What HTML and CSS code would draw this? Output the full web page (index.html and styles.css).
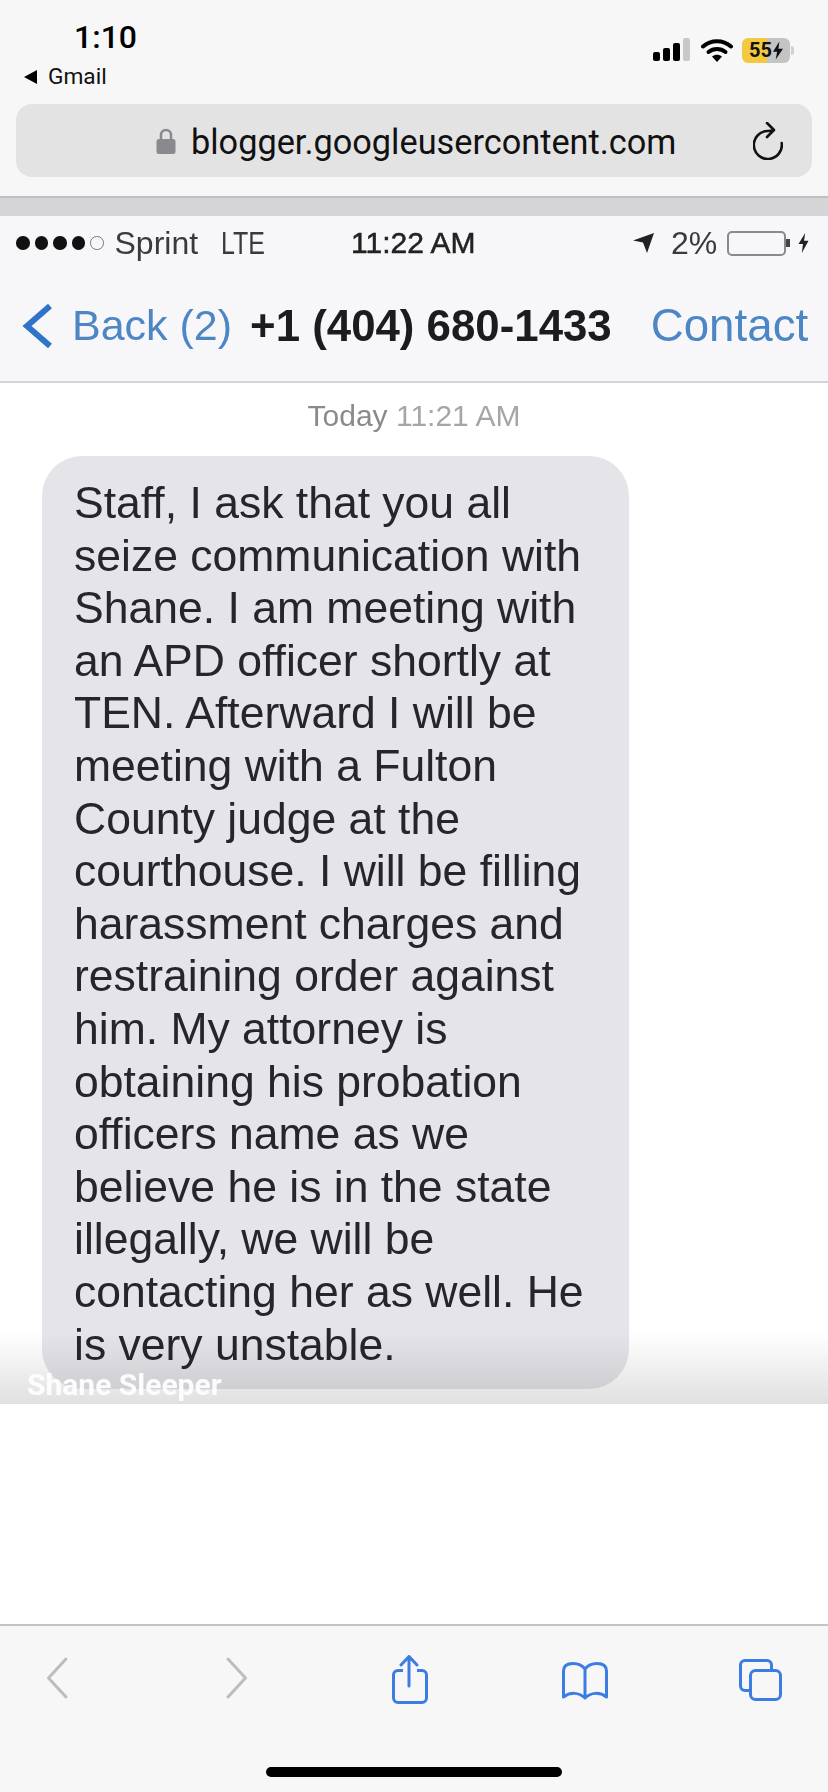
FILE: index.html
```html
<!DOCTYPE html>
<html lang="en">
<head>
  <meta charset="UTF-8">
  <title>blogger.googleusercontent.com</title>
  <link rel="stylesheet" href="styles.css">
</head>
<body>
  <header class="chrome">
    <div class="status">
      <div class="status-left">
        <div class="clock">1:10</div>
        <div class="back-app"><span class="back-tri"></span>Gmail</div>
      </div>
      <div class="status-right">
        <svg class="signal" width="38" height="24" viewBox="0 0 38 24">
          <rect x="0" y="14" width="7" height="9" rx="2" fill="#000"/>
          <rect x="10" y="10" width="7" height="13" rx="2" fill="#000"/>
          <rect x="20" y="5" width="7" height="18" rx="2" fill="#000"/>
          <rect x="30" y="0" width="7" height="23" rx="2" fill="#c8c8c8"/>
        </svg>
        <svg class="wifi" width="32" height="24" viewBox="0 0 32 24">
          <path d="M2 8.500C10 1.500 22 1.500 30 8.500" fill="none" stroke="#000" stroke-width="4" stroke-linecap="round"/>
          <path d="M7.500 14C12.500 10 19.500 10 24.500 14" fill="none" stroke="#000" stroke-width="4" stroke-linecap="round"/>
          <path d="M11 18.500C14 16 18 16 21 18.500L16 24Z" fill="#000"/>
        </svg>
        <div class="battery">
          <span class="battery-num">55</span>
          <svg width="10" height="19" viewBox="0 0 11 20"><path d="M7 0L0 11.500H4.500L3 20L11 8H6Z" fill="#111"/></svg>
        </div>
        <span class="battery-nub"></span>
      </div>
    </div>
    <div class="urlbar">
      <svg class="lock" width="20" height="28" viewBox="0 0 20 28">
        <path d="M5 13V8a5 5 0 0 1 10 0v5" fill="none" stroke="#8a8a8e" stroke-width="2.500"/>
        <rect x="0.500" y="12" width="19" height="15" rx="2.500" fill="#8a8a8e"/>
      </svg>
      <span class="url">blogger.googleusercontent.com</span>
      <svg class="reload" width="30" height="38" viewBox="0 0 30 38">
        <path d="M28.700 21A14 14 0 1 1 15 9L20 8.500" fill="none" stroke="#111" stroke-width="2.600" stroke-linecap="round"/>
        <path d="M14 1L21 8L14 15" fill="none" stroke="#111" stroke-width="2.600" stroke-linecap="round" stroke-linejoin="round"/>
      </svg>
    </div>
  </header>

  <section class="shot">
    <div class="shot-top"></div>
    <div class="phone-status">
      <div class="carrier">
        <span class="dots"><i></i><i></i><i></i><i></i><i class="empty"></i></span>
        <span>Sprint</span><span class="lte">LTE</span>
      </div>
      <div class="phone-time">11:22 AM</div>
      <div class="phone-batt">
        <svg width="22" height="22" viewBox="0 0 22 22"><path d="M22 1L1 8.500L11 10.500L15 21Z" fill="#222"/></svg>
        <span class="pct">2%</span>
        <span class="batt-box"></span>
        <span class="batt-tip"></span>
        <svg class="batt-bolt" width="11" height="20" viewBox="0 0 9 18"><path d="M6 0L0 10H4L3 18L9 7H5Z" fill="#222"/></svg>
      </div>
    </div>
    <nav class="phone-nav">
      <svg class="chev" width="32" height="46" viewBox="0 0 32 46"><path d="M29 3L6 23L29 43" fill="none" stroke="#2f74c8" stroke-width="6"/></svg>
      <span class="nav-link nav-back">Back (2)</span>
      <span class="nav-title">+1 (404) 680-1433</span>
      <span class="nav-link nav-contact">Contact</span>
    </nav>
    <div class="stamp"><b>Today</b> 11:21 AM</div>
    <div class="bubble">Staff, I ask that you all<br>seize communication with<br>Shane. I am meeting with<br>an APD officer shortly at<br>TEN. Afterward I will be<br>meeting with a Fulton<br>County judge at the<br>courthouse. I will be filling<br>harassment charges and<br>restraining order against<br>him. My attorney is<br>obtaining his probation<br>officers name as we<br>believe he is in the state<br>illegally, we will be<br>contacting her as well. He<br>is very unstable.</div>
    <div class="shot-fade"></div>
    <div class="shot-credit">Shane Sleeper</div>
  </section>

  <div class="blank"></div>

  <footer class="toolbar">
    <div class="tools">
      <svg width="48" height="50" viewBox="0 0 48 50"><path d="M32 4L14.500 23L32 42" fill="none" stroke="#bdbdbd" stroke-width="3" stroke-linecap="round" stroke-linejoin="round"/></svg>
      <svg width="48" height="50" viewBox="0 0 48 50"><path d="M18 4L35.500 23L18 42" fill="none" stroke="#bdbdbd" stroke-width="3" stroke-linecap="round" stroke-linejoin="round"/></svg>
      <svg width="48" height="50" viewBox="0 0 48 50">
        <path d="M17 15.500H12a4.500 4.500 0 0 0-4.500 4.500V43a4.500 4.500 0 0 0 4.500 4.500H36a4.500 4.500 0 0 0 4.500-4.500V20a4.500 4.500 0 0 0-4.500-4.500H31" fill="none" stroke="#3b7de3" stroke-width="3"/>
        <path d="M23 31V2M15 10L23 1.500L31 10" fill="none" stroke="#3b7de3" stroke-width="3" stroke-linecap="round" stroke-linejoin="round"/>
      </svg>
      <svg width="48" height="50" viewBox="0 0 48 50">
        <path d="M23 14C20 10 15 8.500 11 8.500C5 8.500 1.500 11 1.500 16V42C8 37 17 37 23 43C29 37 38 37 44.500 42V16C44.500 11 41 8.500 35 8.500C31 8.500 26 10 23 14ZM23 14V43" fill="none" stroke="#3b7de3" stroke-width="3" stroke-linejoin="round"/>
      </svg>
      <svg width="48" height="50" viewBox="0 0 48 50">
        <path d="M33.500 14V10A4.500 4.500 0 0 0 29 5.500H7A4.500 4.500 0 0 0 2.500 10V31A4.500 4.500 0 0 0 7 35.500H12" fill="none" stroke="#3b7de3" stroke-width="3"/>
        <rect x="12.500" y="15.500" width="30" height="29" rx="5" fill="none" stroke="#3b7de3" stroke-width="3"/>
      </svg>
    </div>
    <div class="home-bar"></div>
  </footer>
</body>
</html>
```

FILE: styles.css
```css
body {
  margin: 0;
  width: 828px;
  height: 1792px;
  display: flex;
  flex-direction: column;
  background: #ffffff;
  font-family: "Liberation Sans", Arial, sans-serif;
  overflow: hidden;
}

/* safari chrome */
.chrome {
  height: 198px;
  box-sizing: border-box;
  background: #f7f7f7;
  border-bottom: 2px solid #bfbfc1;
}

.status {
  height: 104px;
  display: flex;
  justify-content: space-between;
}

.status-left {
  padding: 18px 0 0 24px;
}

.clock {
  font-family: Roboto, sans-serif;
  font-size: 32px;
  font-weight: 500;
  line-height: 38px;
  padding-left: 50px;
  color: #000;
}

.back-app {
  display: flex;
  align-items: center;
  font-family: Roboto, sans-serif;
  font-size: 22.700px;
  line-height: 26px;
  margin-top: 8px;
  color: #111;
}

.back-tri {
  width: 0;
  height: 0;
  border-style: solid;
  border-width: 7px 13px 7px 0;
  border-color: transparent #000 transparent transparent;
  margin-right: 11px;
}

.status-right {
  display: flex;
  align-items: center;
  height: 26px;
  margin-top: 37px;
  padding-right: 34px;
}

.wifi {
  margin-left: 10px;
}

.battery {
  width: 48px;
  height: 25px;
  margin-left: 9px;
  border-radius: 6px;
  background: linear-gradient(to right, #f4c93f 0 53%, #c4c4c4 53% 100%);
  display: flex;
  align-items: center;
  justify-content: center;
  gap: 1px;
}

.battery-num {
  font-family: Roboto, sans-serif;
  font-size: 20px;
  font-weight: 700;
  color: #111;
}

.battery-nub {
  width: 3px;
  height: 9px;
  margin-left: 1px;
  border-radius: 0 3px 3px 0;
  background: #d0d0d0;
}

.urlbar {
  height: 73px;
  margin: 0 16px;
  background: #e3e3e4;
  border-radius: 16px;
  display: flex;
  align-items: center;
  padding-left: 140px;
}

.url {
  font-family: Roboto, sans-serif;
  font-size: 34.300px;
  line-height: 40px;
  padding-top: 2px;
  color: #111;
  margin-left: 15px;
}

.reload {
  margin-left: auto;
  margin-right: 29px;
}

/* the screenshot inside the page */
.shot {
  position: relative;
  height: 1206px;
  background: #ffffff;
  overflow: hidden;
}

.shot-top {
  height: 18px;
  background: #d5d5d8;
}

.phone-status {
  height: 54px;
  background: #f7f7f9;
  display: flex;
  align-items: center;
  padding-left: 16px;
  color: #3a3a3c;
  font-size: 32px;
  filter: blur(0.7px);
}

.carrier {
  display: flex;
  align-items: center;
  width: 335px;
}

.dots {
  display: flex;
  gap: 5px;
  margin-right: 11px;
}

.dots i {
  width: 13.500px;
  height: 13.500px;
  border-radius: 50%;
  background: #111;
}

.dots i.empty {
  box-sizing: border-box;
  background: none;
  border: 1.500px solid #777;
}

.lte {
  margin-left: 23px;
  transform: scaleX(0.78);
  transform-origin: left center;
}

.phone-time {
  width: 281px;
  font-size: 30px;
  color: #222;
  -webkit-text-stroke: 0.5px #222;
}

.phone-batt {
  display: flex;
  align-items: center;
}

.pct {
  margin: 0 10px 0 17px;
}

.batt-box {
  width: 59px;
  height: 25px;
  box-sizing: border-box;
  border: 2.500px solid #8a8a8a;
  border-radius: 5px;
}

.batt-tip {
  width: 4px;
  height: 8px;
  background: #444;
}

.batt-bolt {
  margin-left: 8px;
}

.phone-nav {
  height: 113px;
  box-sizing: border-box;
  background: #f7f7f9;
  border-bottom: 2px solid #d4d4d6;
  display: flex;
  align-items: center;
  padding-left: 21px;
  font-size: 43px;
  filter: blur(0.7px);
}

.nav-link {
  color: #4c86c4;
}

.nav-back {
  margin-left: 19px;
}

.nav-title {
  margin-left: 18px;
  font-size: 43.800px;
  font-weight: 700;
  color: #1c1c1e;
}

.nav-contact {
  margin-left: 39px;
  font-size: 45.700px;
}

.stamp {
  text-align: center;
  font-size: 30px;
  line-height: 34px;
  color: #a6a6a8;
  padding: 16px 0 23px;
  filter: blur(0.7px);
}

.stamp b {
  color: #8a8a8c;
  font-weight: 400;
}

.bubble {
  box-sizing: border-box;
  width: 587px;
  height: 933px;
  margin-left: 42px;
  padding: 21px 0 0 32px;
  background: #e4e4e9;
  border-radius: 40px;
  font-size: 44.500px;
  line-height: 52.600px;
  color: #26262a;
  filter: blur(0.7px);
}

.shot-fade {
  position: absolute;
  left: 0;
  right: 0;
  bottom: 0;
  height: 72px;
  background: linear-gradient(to bottom, rgba(0, 0, 0, 0), rgba(0, 0, 0, 0.12));
}

.shot-credit {
  position: absolute;
  left: 27px;
  bottom: 4px;
  font-family: Roboto, sans-serif;
  font-size: 30px;
  line-height: 30px;
  font-weight: 700;
  color: #ffffff;
  opacity: 0.92;
}

.blank {
  flex: 1;
}

/* bottom bar */
.toolbar {
  height: 168px;
  box-sizing: border-box;
  background: #f7f7f8;
  border-top: 2px solid #c4c4c6;
  position: relative;
}

.tools {
  display: flex;
  gap: 128px;
  padding: 29px 0 0 34px;
}

.home-bar {
  position: absolute;
  left: 266px;
  bottom: 15px;
  width: 296px;
  height: 10px;
  border-radius: 5px;
  background: #000;
}
```
